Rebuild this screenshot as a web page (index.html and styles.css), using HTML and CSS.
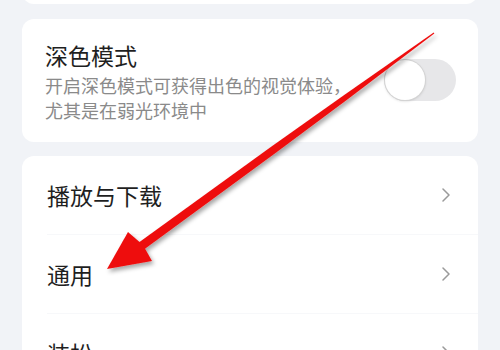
FILE: index.html
```html
<!DOCTYPE html>
<html lang="zh-CN">
<head>
<meta charset="utf-8">
<link rel="stylesheet" href="styles.css">
</head>
<body>
<div class="page">
  <div class="card card-top"></div>
  <div class="card card-dark">
    <div class="dark-text">
      <div class="title">深色模式</div>
      <div class="desc">开启深色模式可获得出色的视觉体验，<br>尤其是在弱光环境中</div>
    </div>
    <div class="switch"><span class="knob"></span></div>
  </div>
  <div class="card card-list">
    <div class="row"><span class="row-label">播放与下载</span>
      <svg class="chev" width="8" height="14" viewBox="0 0 8 14"><path d="M1 1 L7 7 L1 13" fill="none" stroke="#9a9a9a" stroke-width="1.5" stroke-linecap="round" stroke-linejoin="round"/></svg>
    </div>
    <div class="row"><span class="row-label">通用</span>
      <svg class="chev" width="8" height="14" viewBox="0 0 8 14"><path d="M1 1 L7 7 L1 13" fill="none" stroke="#9a9a9a" stroke-width="1.5" stroke-linecap="round" stroke-linejoin="round"/></svg>
    </div>
    <div class="row"><span class="row-label">装扮</span>
      <svg class="chev" width="8" height="14" viewBox="0 0 8 14"><path d="M1 1 L7 7 L1 13" fill="none" stroke="#9a9a9a" stroke-width="1.5" stroke-linecap="round" stroke-linejoin="round"/></svg>
    </div>
  </div>
</div>
<svg class="arrow" width="500" height="350" viewBox="0 0 500 350">
  <defs>
    <filter id="sh" x="-20%" y="-20%" width="140%" height="140%">
      <feDropShadow dx="2" dy="3" stdDeviation="2" flood-color="#000" flood-opacity="0.35"/>
    </filter>
  </defs>
  <g filter="url(#sh)" fill="#ee1111">
    <polygon points="434.3,33.4 347.4,99.5 274.5,153.8 142.6,250.6 137.4,243.4 270.1,147.6 344.2,94.9 433.7,32.6"/>
    <polygon points="107,269 128,232 143,245 152,261"/>
  </g>
</svg>
</body>
</html>
```

FILE: styles.css
```css
html, body {
  margin: 0;
  padding: 0;
}
body {
  width: 500px;
  height: 350px;
  overflow: hidden;
  background: #f1f3f7;
  font-family: "Noto Sans CJK SC", "Noto Sans", sans-serif;
  position: relative;
}
.page {
  padding: 0 22px;
  display: flex;
  flex-direction: column;
}
.card {
  background: #ffffff;
  border-radius: 12px;
}
.card-top {
  height: 44px;
  margin-top: -40px;
  margin-bottom: 15px;
}
.card-dark {
  display: flex;
  align-items: center;
  justify-content: space-between;
  padding: 21px 22px 19px 23px;
  margin-bottom: 14px;
}
.title {
  font-size: 23px;
  line-height: 30px;
  color: #1f1f1f;
  margin-bottom: 3px;
}
.desc {
  font-size: 18px;
  line-height: 25px;
  color: #8a8a8a;
}
.switch {
  width: 72px;
  height: 42px;
  border-radius: 21px;
  background: #e7e7e9;
  display: flex;
  align-items: center;
  padding: 1px;
  box-sizing: border-box;
  margin-top: -4px;
}
.knob {
  width: 40px;
  height: 40px;
  border-radius: 50%;
  background: #ffffff;
  box-shadow: 0 0 0 1px #d4d4d4, 0 1px 3px rgba(0,0,0,0.18);
}
.card-list {
  padding-top: 0;
}
.row {
  height: 79px;
  display: flex;
  align-items: center;
  justify-content: space-between;
  margin-left: 25px;
  padding-right: 28px;
  border-bottom: 1px solid #f7f8fa;
  box-sizing: border-box;
}
.row-label {
  font-size: 23px;
  color: #1f1f1f;
}
.arrow {
  position: absolute;
  left: 0;
  top: 0;
  pointer-events: none;
}
```
